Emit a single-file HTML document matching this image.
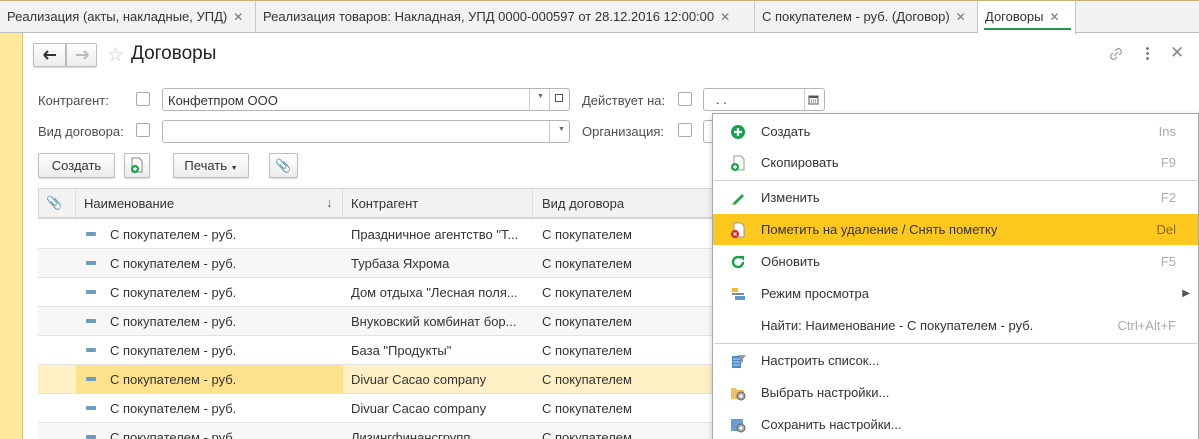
<!DOCTYPE html>
<html><head><meta charset="utf-8"><style>
*{box-sizing:border-box;margin:0;padding:0}
html,body{width:1199px;height:439px;overflow:hidden}
body{background:#fff;font-family:"Liberation Sans",Arial,sans-serif;font-size:13px;color:#333;position:relative}
.a{position:absolute;white-space:nowrap}
.tabs{position:absolute;left:0;top:0;width:1199px;height:33px;background:#f2f2f2;border-top:1px solid #c8b27a;border-bottom:1px solid #bdbdbd}
.tab{position:absolute;top:0;height:32px;line-height:32px;padding-left:7px;border-right:1px solid #c8c8c8;color:#333}
.tab .x{color:#777;margin-left:6px;font-size:12px}
.side{position:absolute;left:0;top:33px;width:23px;height:406px;background:#fde89c;border-right:1px solid #d8c37a}
.cb{position:absolute;width:14px;height:14px;border:1px solid #aaa;border-radius:2px;background:#fff}
.inp{position:absolute;height:23px;border:1px solid #b5b5b5;border-radius:3px;background:#fff}
.btn{position:absolute;height:25px;border:1px solid #bdbdbd;border-radius:2px;background:linear-gradient(#fff,#ececec);box-shadow:0 1px 1px rgba(0,0,0,.15);line-height:23px;text-align:center}
.row{position:absolute;left:38px;width:680px;height:29px;border-bottom:1px solid #e3e3e3}
.row span{position:absolute;top:7px}
.dash{position:absolute;left:48px;top:12px;width:10px;height:4px;background:#6a9dc0;border-radius:1px}
.menu{position:absolute;left:712px;top:113px;width:487px;height:340px;background:#fff;border:1px solid #a8a8a8;box-shadow:0 2px 6px rgba(0,0,0,.2)}
.mi{position:absolute;left:0;width:485px;height:31px;line-height:31px}
.mi .t{position:absolute;left:48px}
.mi .k{position:absolute;right:22px;color:#aaa}
.mi .ic{position:absolute;left:17px;top:8px;width:16px;height:16px}
.sep{position:absolute;left:1px;width:483px;height:1px;background:#d0d0d0}
</style></head><body>
<div class="tabs">
<div class="tab" style="left:0;width:256px">Реализация (акты, накладные, УПД)<span class="x">✕</span></div>
<div class="tab" style="left:256px;width:499px">Реализация товаров: Накладная, УПД 0000-000597 от 28.12.2016 12:00:00<span class="x">✕</span></div>
<div class="tab" style="left:755px;width:223px">С покупателем - руб. (Договор)<span class="x">✕</span></div>
<div class="tab" style="left:978px;width:98px;background:#fff;height:33px">Договоры<span class="x">✕</span></div>
<div class="a" style="left:984px;top:27px;width:87px;height:2px;background:#1e9a4f"></div>
</div>
<div class="side"></div>
<!-- header -->
<div class="btn" style="left:33px;top:43px;width:33px;height:24px;border-radius:2px 0 0 2px"><svg width="14" height="10" style="margin-top:6px" viewBox="0 0 14 10"><path d="M1 5h12M1 5l4-4M1 5l4 4" stroke="#333" stroke-width="2" fill="none"/></svg></div>
<div class="btn" style="left:66px;top:43px;width:31px;height:24px;border-radius:0 2px 2px 0"><svg width="14" height="10" style="margin-top:6px" viewBox="0 0 14 10"><path d="M1 5h12M13 5l-4-4M13 5l-4 4" stroke="#bbb" stroke-width="2" fill="none"/></svg></div>
<div class="a" style="left:107px;top:44px;color:#ccc;font-size:19px">☆</div>
<div class="a" style="left:131px;top:43px;font-size:19px;color:#222">Договоры</div>
<svg class="a" style="left:1108px;top:46px" width="16" height="16" viewBox="0 0 16 16"><path d="M7 5l2-2a3 3 0 014 4l-2 2M9 11l-2 2a3 3 0 01-4-4l2-2M6 10l4-4" stroke="#999" fill="none" stroke-width="1.2"/></svg>
<div class="a" style="left:1146px;top:46px;width:3px;height:14px;background:radial-gradient(circle,#777 1.3px,transparent 1.5px) 0 0/3px 5px"></div>
<div class="a" style="left:1170px;top:43px;color:#888;font-size:17px">✕</div>
<!-- filters -->
<div class="a" style="left:38px;top:93px;color:#4d4d4d">Контрагент:</div>
<div class="cb" style="left:136px;top:92px"></div>
<div class="inp" style="left:162px;top:88px;width:408px"><span class="a" style="left:5px;top:4px">Конфетпром ООО</span>
<div class="a" style="left:366px;top:0;width:1px;height:21px;background:#ccc"></div><div class="a" style="left:374px;top:4px;font-size:7px;color:#666">▼</div>
<div class="a" style="left:386px;top:0;width:1px;height:21px;background:#ccc"></div><div class="a" style="left:392px;top:5px;width:8px;height:8px;border:1px solid #555"></div></div>
<div class="a" style="left:582px;top:93px;color:#4d4d4d">Действует на:</div>
<div class="cb" style="left:678px;top:92px"></div>
<div class="inp" style="left:703px;top:88px;width:122px"><span class="a" style="left:12px;top:3px">. .</span><div class="a" style="left:100px;top:0;width:1px;height:21px;background:#ccc"></div>
<svg class="a" style="left:104px;top:5px" width="11" height="11"><rect x="1" y="2" width="9" height="8" fill="none" stroke="#555"/><rect x="1" y="2" width="9" height="2" fill="#555"/><path d="M3 6h1M5 6h1M7 6h1M3 8h1M5 8h1M7 8h1" stroke="#555"/></svg></div>
<div class="a" style="left:38px;top:124px;color:#4d4d4d">Вид договора:</div>
<div class="cb" style="left:136px;top:123px"></div>
<div class="inp" style="left:162px;top:120px;width:408px"><div class="a" style="left:386px;top:0;width:1px;height:21px;background:#ccc"></div><div class="a" style="left:395px;top:5px;font-size:7px;color:#666">▼</div></div>
<div class="a" style="left:582px;top:124px;color:#4d4d4d">Организация:</div>
<div class="cb" style="left:678px;top:123px"></div>
<div class="inp" style="left:703px;top:120px;width:20px"></div>
<!-- buttons -->
<div class="btn" style="left:38px;top:153px;width:77px">Создать</div>
<div class="btn" style="left:124px;top:153px;width:26px"><svg width="14" height="16" style="margin-top:3px" viewBox="0 0 14 16"><path d="M2 1h7l3 3v11H2z" fill="#fff" stroke="#888"/><circle cx="5" cy="12" r="4" fill="#19a24a"/><path d="M5 10v4M3 12h4" stroke="#fff" stroke-width="1.4"/></svg></div>
<div class="btn" style="left:173px;top:153px;width:76px">Печать <span style="font-size:7px">▼</span></div>
<div class="btn" style="left:269px;top:153px;width:29px;color:#888">📎</div>
<!-- table -->
<div class="a" style="left:38px;top:188px;width:680px;height:31px;background:#f2f2f2;border:1px solid #d5d5d5;border-bottom:2px solid #d5d5d5"></div>
<div class="a" style="left:46px;top:195px;color:#888">📎</div>
<div class="a" style="left:75px;top:189px;width:1px;height:250px;background:#ddd"></div>
<div class="a" style="left:342px;top:189px;width:1px;height:250px;background:#ddd"></div>
<div class="a" style="left:532px;top:189px;width:1px;height:250px;background:#ddd"></div>
<div class="a" style="left:84px;top:196px">Наименование</div>
<div class="a" style="left:326px;top:195px;color:#666">↓</div>
<div class="a" style="left:351px;top:196px">Контрагент</div>
<div class="a" style="left:542px;top:196px">Вид договора</div>
<div class="row" style="top:220px;background:#fff"><div class="dash"></div><span style="left:72px">С покупателем - руб.</span><span style="left:313px">Праздничное агентство "Т...</span><span style="left:504px">С покупателем</span></div>
<div class="row" style="top:249px;background:#f7f7f7"><div class="dash"></div><span style="left:72px">С покупателем - руб.</span><span style="left:313px">Турбаза Яхрома</span><span style="left:504px">С покупателем</span></div>
<div class="row" style="top:278px;background:#fff"><div class="dash"></div><span style="left:72px">С покупателем - руб.</span><span style="left:313px">Дом отдыха "Лесная поля...</span><span style="left:504px">С покупателем</span></div>
<div class="row" style="top:307px;background:#f7f7f7"><div class="dash"></div><span style="left:72px">С покупателем - руб.</span><span style="left:313px">Внуковский комбинат бор...</span><span style="left:504px">С покупателем</span></div>
<div class="row" style="top:336px;background:#fff"><div class="dash"></div><span style="left:72px">С покупателем - руб.</span><span style="left:313px">База "Продукты"</span><span style="left:504px">С покупателем</span></div>
<div class="row" style="top:365px;background:#fff0c6"><div class="a" style="left:38px;top:0;width:267px;height:28px;background:#fde28e"></div><div class="dash"></div><span style="left:72px">С покупателем - руб.</span><span style="left:313px">Divuar Cacao company</span><span style="left:504px">С покупателем</span></div>
<div class="row" style="top:394px;background:#fff"><div class="dash"></div><span style="left:72px">С покупателем - руб.</span><span style="left:313px">Divuar Cacao company</span><span style="left:504px">С покупателем</span></div>
<div class="row" style="top:423px;background:#f7f7f7"><div class="dash"></div><span style="left:72px">С покупателем - руб.</span><span style="left:313px">Лизингфинансгрупп</span><span style="left:504px">С покупателем</span></div>
<!-- menu -->
<div class="menu">
<div class="mi" style="top:2px"><svg class="ic" viewBox="0 0 16 16"><circle cx="8" cy="8" r="7" fill="#17a349"/><path d="M8 4v8M4 8h8" stroke="#fff" stroke-width="2.2"/></svg><span class="t">Создать</span><span class="k">Ins</span></div>
<div class="mi" style="top:33px"><svg class="ic" viewBox="0 0 16 16"><path d="M4 1h7l3 3v11H4z" fill="#fff" stroke="#999"/><circle cx="5" cy="12" r="4" fill="#17a349"/><path d="M5 10v4M3 12h4" stroke="#fff" stroke-width="1.4"/></svg><span class="t">Скопировать</span><span class="k">F9</span></div>
<div class="sep" style="top:66px"></div>
<div class="mi" style="top:68px"><svg class="ic" viewBox="0 0 16 16"><path d="M3 13l9-9 2 2-9 9z" fill="#2aa24a"/><path d="M3 13l-1 2 2-0z" fill="#d08040"/></svg><span class="t">Изменить</span><span class="k">F2</span></div>
<div class="mi" style="top:100px;background:#fdc81e"><svg class="ic" viewBox="0 0 16 16"><path d="M4 1h7l3 3v11H4z" fill="#fff" stroke="#999"/><circle cx="5" cy="12" r="4" fill="#e02020"/><path d="M3.5 10.5l3 3M6.5 10.5l-3 3" stroke="#fff" stroke-width="1.2"/></svg><span class="t">Пометить на удаление / Снять пометку</span><span class="k" style="color:#8a6b10">Del</span></div>
<div class="mi" style="top:132px"><svg class="ic" viewBox="0 0 16 16"><path d="M13 8a5 5 0 11-2-4" fill="none" stroke="#17a349" stroke-width="2.4"/><path d="M9 2h5v5z" fill="#17a349"/></svg><span class="t">Обновить</span><span class="k">F5</span></div>
<div class="mi" style="top:164px"><svg class="ic" viewBox="0 0 16 16"><rect x="2" y="2" width="6" height="4" fill="#f0b830"/><rect x="2" y="7" width="12" height="2" fill="#888"/><rect x="5" y="10" width="10" height="4" fill="#5a9ad0"/></svg><span class="t">Режим просмотра</span><span class="k" style="right:8px;color:#555;font-size:10px">▶</span></div>
<div class="mi" style="top:196px"><span class="t">Найти: Наименование - С покупателем - руб.</span><span class="k">Ctrl+Alt+F</span></div>
<div class="sep" style="top:229px"></div>
<div class="mi" style="top:231px"><svg class="ic" viewBox="0 0 16 16"><rect x="2" y="3" width="9" height="12" fill="#4a8ac8"/><path d="M3 6h7M3 9h7M3 12h7" stroke="#cde"/><path d="M8 2h8l-3 4v4l-2-1V6z" fill="#999"/></svg><span class="t">Настроить список...</span></div>
<div class="mi" style="top:263px"><svg class="ic" viewBox="0 0 16 16"><path d="M1 3h5l1 2h7v9H1z" fill="#f0c060"/><circle cx="11" cy="11" r="4" fill="#aaa" stroke="#666"/><circle cx="11" cy="11" r="1.5" fill="#fff"/></svg><span class="t">Выбрать настройки...</span></div>
<div class="mi" style="top:295px"><svg class="ic" viewBox="0 0 16 16"><rect x="1" y="2" width="12" height="12" fill="#6a9ed0"/><circle cx="11" cy="11" r="4" fill="#aaa" stroke="#666"/><circle cx="11" cy="11" r="1.5" fill="#fff"/></svg><span class="t">Сохранить настройки...</span></div>
</div>
</body></html>
